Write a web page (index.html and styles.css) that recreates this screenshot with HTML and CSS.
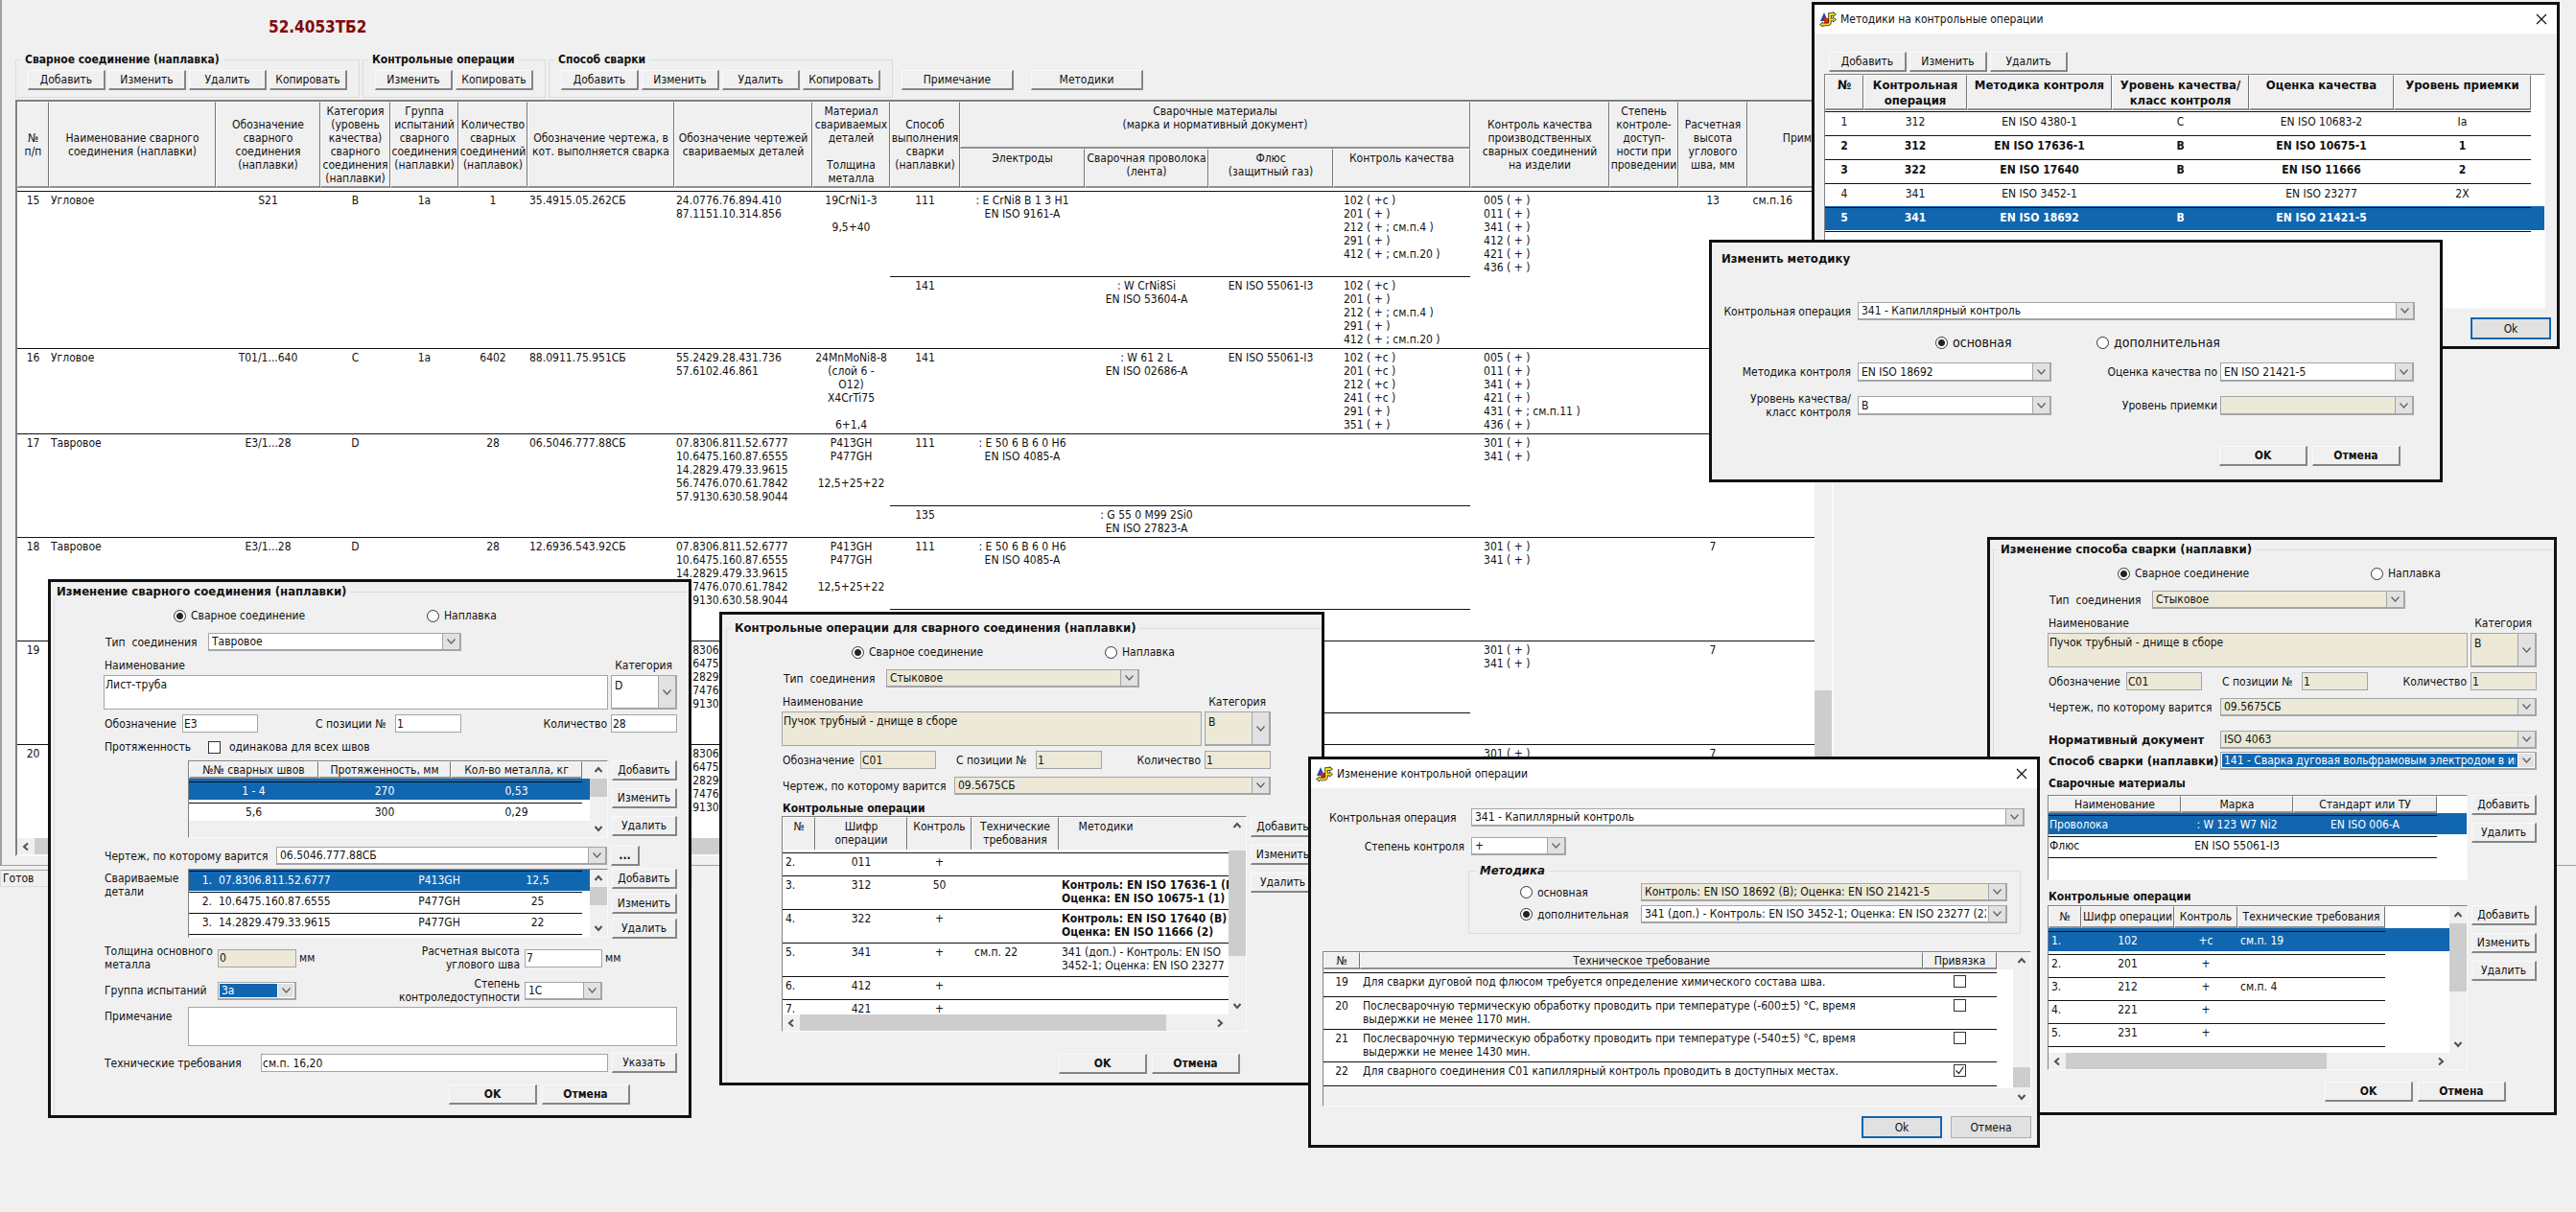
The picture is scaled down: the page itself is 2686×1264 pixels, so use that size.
FILE: index.html
```html
<!DOCTYPE html>
<html lang="ru">
<head>
<meta charset="utf-8">
<title>52.4053ТБ2</title>
<link rel="stylesheet" href="styles.css">
</head>
<body>
<svg class="defs" aria-hidden="true">
  <symbol id="up" viewBox="0 0 10 10"><path d="M1.5 7 5 3l3.500 4" fill="none" stroke="#505050" stroke-width="2"/></symbol>
  <symbol id="down" viewBox="0 0 10 10"><path d="M1.500 3 5 7l3.500-4" fill="none" stroke="#505050" stroke-width="2"/></symbol>
  <symbol id="left" viewBox="0 0 10 10"><path d="M7 1.500 3 5l4 3.500" fill="none" stroke="#505050" stroke-width="2"/></symbol>
  <symbol id="right" viewBox="0 0 10 10"><path d="M3 1.500 7 5l-4 3.500" fill="none" stroke="#505050" stroke-width="2"/></symbol>
  <symbol id="close" viewBox="0 0 12 12"><path d="M1 1l10 10M11 1 1 11" fill="none" stroke="#111" stroke-width="1.200"/></symbol>
  <symbol id="app" viewBox="0 0 18 16">
    <path d="M5 1 9 10H1z" fill="#2a4a9e"/>
    <path d="M5 7h5v5H5z" fill="#e0211b"/>
    <path d="M15 3h-4v8q0 2.500-2.500 2.500H3M11 8.500h4" fill="none" stroke="#222" stroke-width="3.400"/>
    <path d="M14 0l4 3-4 3zM14 5.500l4 3-4 3zM4 10.500 0 13.500l4 3z" fill="#222"/>
    <path d="M15 3h-4v8q0 2.500-2.500 2.500H3M11 8.500h4" fill="none" stroke="#f3e21a" stroke-width="1.800"/>
    <path d="M14.500 1.200 17 3l-2.500 1.800zM14.500 6.700 17 8.500l-2.500 1.800zM3.500 11.700 1 13.500l2.500 1.800z" fill="#f3e21a"/>
  </symbol>
</svg>

<main class="workspace">
  <h1>52.4053ТБ2</h1>
  <div class="toolbar">
    <fieldset class="group"><legend>Сварное соединение (наплавка)</legend>
      <button>Добавить</button><button>Изменить</button><button>Удалить</button><button>Копировать</button>
    </fieldset>
    <fieldset class="group"><legend>Контрольные операции</legend>
      <button>Изменить</button><button>Копировать</button>
    </fieldset>
    <fieldset class="group"><legend>Способ сварки</legend>
      <button>Добавить</button><button>Изменить</button><button>Удалить</button><button>Копировать</button>
    </fieldset>
    <div class="extra"><button>Примечание</button><button>Методики</button></div>
  </div>

  <section class="frame">
    <div class="view">
      <table class="welds">
        <colgroup><col style="width:33px"><col style="width:174px"><col style="width:109px"><col style="width:73px"><col style="width:71px"><col style="width:72px"><col style="width:153px"><col style="width:144px"><col style="width:81px"><col style="width:73px"><col style="width:130px"><col style="width:129px"><col style="width:130px"><col style="width:143px"><col style="width:145px"><col style="width:72px"><col style="width:72px"><col style="width:144px"></colgroup>
        <thead>
          <tr>
            <th rowspan="2">№<br>п/п</th><th rowspan="2">Наименование сварного<br>соединения (наплавки)</th><th rowspan="2">Обозначение<br>сварного<br>соединения<br>(наплавки)</th><th rowspan="2">Категория<br>(уровень<br>качества)<br>сварного<br>соединения<br>(наплавки)</th><th rowspan="2">Группа<br>испытаний<br>сварного<br>соединения<br>(наплавки)<br>&nbsp;</th><th rowspan="2">Количество<br>сварных<br>соединений<br>(наплавок)</th><th rowspan="2">Обозначение чертежа, в<br>кот. выполняется сварка</th><th rowspan="2">Обозначение чертежей<br>свариваемых деталей</th><th rowspan="2">Материал<br>свариваемых<br>деталей<br><br>Толщина<br>металла</th><th rowspan="2">Способ<br>выполнения<br>сварки<br>(наплавки)</th><th colspan="4" class="top">Сварочные материалы<br>(марка и нормативный документ)</th><th rowspan="2">Контроль качества<br>производственных<br>сварных соединений<br>на изделии</th><th rowspan="2">Степень<br>контроле-<br>доступ-<br>ности при<br>проведении<br>&nbsp;</th><th rowspan="2">Расчетная<br>высота<br>углового<br>шва, мм</th><th rowspan="2">Примечание<br>&nbsp;</th>
          </tr>
          <tr><th class="top">Электроды</th><th class="top">Сварочная проволока<br>(лента)</th><th class="top">Флюс<br>(защитный газ)</th><th class="top">Контроль качества</th></tr>
          <tr class="gap"><td colspan="18"></td></tr>
        </thead>
        <tbody>
          <tr class="h89"><td rowspan="2">15</td><td rowspan="2" class="l">Угловое</td><td rowspan="2">S21</td><td rowspan="2">B</td><td rowspan="2">1a</td><td rowspan="2">1</td><td rowspan="2" class="l">35.4915.05.262СБ</td><td rowspan="2" class="l">24.0776.76.894.410<br>87.1151.10.314.856</td><td rowspan="2">19CrNi1-3<br><br>9,5+40</td><td>111</td><td>: E CrNi8 B 1 3 H1<br>EN ISO 9161-A</td><td></td><td></td><td class="l in">102 ( +c )<br>201 ( + )<br>212 ( + ; см.п.4 )<br>291 ( + )<br>412 ( + ; см.п.20 )</td><td rowspan="2" class="l in2">005 ( + )<br>011 ( + )<br>341 ( + )<br>412 ( + )<br>421 ( + )<br>436 ( + )</td><td rowspan="2"></td><td rowspan="2">13</td><td rowspan="2" class="l">&nbsp;см.п.16</td></tr>
          <tr class="h75"><td>141</td><td></td><td>: W CrNi8Si<br>EN ISO 53604-A</td><td>EN ISO 55061-I3</td><td class="l in">102 ( +c )<br>201 ( + )<br>212 ( + ; см.п.4 )<br>291 ( + )<br>412 ( + ; см.п.20 )</td></tr>
          <tr class="h89"><td>16</td><td class="l">Угловое</td><td>T01/1...640</td><td>C</td><td>1a</td><td>6402</td><td class="l">88.0911.75.951СБ</td><td class="l">55.2429.28.431.736<br>57.6102.46.861</td><td>24MnMoNi8-8<br>(слой 6 -<br>O12)<br>X4CrTi75<br><br>6+1,4</td><td>141</td><td></td><td>: W 61 2 L<br>EN ISO 02686-A</td><td>EN ISO 55061-I3</td><td class="l in">102 ( +c )<br>201 ( +c )<br>212 ( +c )<br>241 ( +c )<br>291 ( + )<br>351 ( + )</td><td class="l in2">005 ( + )<br>011 ( + )<br>341 ( + )<br>421 ( + )<br>431 ( + ; см.п.11 )<br>436 ( + )</td><td></td><td></td><td></td></tr>
          <tr class="h75"><td rowspan="2">17</td><td rowspan="2" class="l">Тавровое</td><td rowspan="2">E3/1...28</td><td rowspan="2">D</td><td rowspan="2"></td><td rowspan="2">28</td><td rowspan="2" class="l">06.5046.777.88СБ</td><td rowspan="2" class="l">07.8306.811.52.6777<br>10.6475.160.87.6555<br>14.2829.479.33.9615<br>56.7476.070.61.7842<br>57.9130.630.58.9044</td><td rowspan="2">P413GH<br>P477GH<br><br>12,5+25+22</td><td>111</td><td>: E 50 6 B 6 0 H6<br>EN ISO 4085-A</td><td></td><td></td><td></td><td rowspan="2" class="l in2">301 ( + )<br>341 ( + )</td><td rowspan="2"></td><td rowspan="2"></td><td rowspan="2"></td></tr>
          <tr class="h33"><td>135</td><td></td><td>: G 55 0 M99 2Si0<br>EN ISO 27823-A</td><td></td><td></td></tr>
          <tr class="h75"><td rowspan="2">18</td><td rowspan="2" class="l">Тавровое</td><td rowspan="2">E3/1...28</td><td rowspan="2">D</td><td rowspan="2"></td><td rowspan="2">28</td><td rowspan="2" class="l">12.6936.543.92СБ</td><td rowspan="2" class="l">07.8306.811.52.6777<br>10.6475.160.87.6555<br>14.2829.479.33.9615<br>56.7476.070.61.7842<br>57.9130.630.58.9044</td><td rowspan="2">P413GH<br>P477GH<br><br>12,5+25+22</td><td>111</td><td>: E 50 6 B 6 0 H6<br>EN ISO 4085-A</td><td></td><td></td><td></td><td rowspan="2" class="l in2">301 ( + )<br>341 ( + )</td><td rowspan="2"></td><td rowspan="2">7</td><td rowspan="2"></td></tr>
          <tr class="h33"><td></td><td></td><td></td><td></td><td></td></tr>
          <tr class="h75"><td rowspan="2">19</td><td rowspan="2"></td><td rowspan="2"></td><td rowspan="2"></td><td rowspan="2"></td><td rowspan="2"></td><td rowspan="2"></td><td rowspan="2" class="l">07.8306.811.52.6777<br>10.6475.160.87.6555<br>14.2829.479.33.9615<br>56.7476.070.61.7842<br>57.9130.630.58.9044</td><td rowspan="2"></td><td></td><td></td><td></td><td></td><td></td><td rowspan="2" class="l in2">301 ( + )<br>341 ( + )</td><td rowspan="2"></td><td rowspan="2">7</td><td rowspan="2"></td></tr>
          <tr class="h33"><td></td><td></td><td></td><td></td><td></td></tr>
          <tr class="h108"><td>20</td><td></td><td></td><td></td><td></td><td></td><td></td><td class="l">07.8306.811.52.6777<br>10.6475.160.87.6555<br>14.2829.479.33.9615<br>56.7476.070.61.7842<br>57.9130.630.58.9044</td><td></td><td></td><td></td><td></td><td></td><td></td><td class="l in2">301 ( + )<br>341 ( + )</td><td></td><td>7</td><td></td></tr>
        </tbody>
      </table>
    </div>
    <div class="vscroll"><svg><use href="#up"/></svg><i style="margin-top:596px;height:110px"></i><svg class="end"><use href="#down"/></svg></div>
    <div class="hscroll"><svg><use href="#left"/></svg><i style="width:1300px"></i><svg class="end"><use href="#right"/></svg></div>
  </section>
</main>
<footer class="status">Готов</footer>

<section class="window w-weld">
  <fieldset><legend>Изменение сварного соединения (наплавки)</legend>
    <div class="line radios"><label><input type="radio" name="a" checked>Сварное соединение</label><label><input type="radio" name="a">Наплавка</label></div>
    <div class="line type"><label for="a1">Тип&nbsp; соединения</label><select id="a1"><option>Тавровое</option></select></div>
    <div class="line caps"><label for="a2">Наименование</label><label for="a3">Категория</label></div>
    <div class="line name"><textarea id="a2">Лист-труба</textarea><select id="a3"><option>D</option></select></div>
    <div class="line ids"><label for="a4">Обозначение</label><input id="a4" class="code" value="E3"><label for="a5" class="pos">С позиции №</label><input id="a5" value="1"><label for="a6" class="qty">Количество</label><input id="a6" value="28"></div>
    <div class="line same"><span>Протяженность</span><label><input type="checkbox">одинакова для всех швов</label></div>
    <div class="list">
      <span class="side"></span>
      <div class="box h81">
        <div class="rows r3">
          <table><colgroup><col style="width:135px"><col style="width:138px"><col style="width:137px"><col></colgroup>
            <thead><tr><th>№№ сварных швов</th><th>Протяженность, мм</th><th>Кол-во металла, кг</th><td></td></tr></thead>
            <tbody><tr class="sel"><td>1 - 4</td><td>270</td><td>0,53</td><td></td></tr><tr><td>5,6</td><td>300</td><td>0,29</td><td></td></tr></tbody></table>
        </div>
        <div class="vscroll"><svg><use href="#up"/></svg><i style="height:19px"></i><svg class="end"><use href="#down"/></svg></div>
      </div>
      <div class="acts"><button>Добавить</button><button>Изменить</button><button>Удалить</button></div>
    </div>
    <div class="line draw"><label for="a7">Чертеж, по которому варится</label><select id="a7"><option>06.5046.777.88СБ</option></select><button class="dots">...</button></div>
    <div class="list parts">
      <span class="side">Свариваемые<br>детали</span>
      <div class="box h72">
        <div class="rows r1">
          <table><colgroup><col style="width:31px"><col style="width:174px"><col style="width:112px"><col style="width:93px"><col></colgroup>
            <tbody><tr class="sel"><td class="r">1.</td><td class="l">07.8306.811.52.6777</td><td>P413GH</td><td>12,5</td><td></td></tr><tr><td class="r">2.</td><td class="l">10.6475.160.87.6555</td><td>P477GH</td><td>25</td><td></td></tr><tr><td class="r">3.</td><td class="l">14.2829.479.33.9615</td><td>P477GH</td><td>22</td><td></td></tr><tr><td></td><td></td><td></td><td></td><td></td></tr></tbody></table>
        </div>
        <div class="vscroll"><svg><use href="#up"/></svg><i style="height:19px"></i><svg class="end"><use href="#down"/></svg></div>
      </div>
      <div class="acts"><button>Добавить</button><button>Изменить</button><button>Удалить</button></div>
    </div>
    <div class="pair"><label for="b1">Толщина основного<br>металла</label><input id="b1" class="off" value="0"><span>мм</span><label for="b2" class="r">Расчетная высота<br>углового шва</label><input id="b2" value="7"><span>мм</span></div>
    <div class="pair"><label for="b3">Группа испытаний</label><select id="b3" class="focus"><option>3a</option></select><span></span><label for="b4" class="r">Степень<br>контроледоступности</label><select id="b4"><option>1C</option></select><span></span></div>
    <div class="line note"><label for="b5">Примечание</label><textarea id="b5"></textarea></div>
    <div class="line tech"><label for="b6">Технические требования</label><input id="b6" value="см.п. 16,20"><button>Указать</button></div>
    <div class="ok"><button>OK</button><button>Отмена</button></div>
  </fieldset>
</section>

<section class="window w-ops">
  <fieldset><legend>Контрольные операции для сварного соединения (наплавки)</legend>
    <div class="line radios"><label><input type="radio" name="c" checked>Сварное соединение</label><label><input type="radio" name="c">Наплавка</label></div>
    <div class="line type"><label for="c1">Тип&nbsp; соединения</label><select id="c1" class="off"><option>Стыковое</option></select></div>
    <div class="line caps"><label for="c2">Наименование</label><label for="c3">Категория</label></div>
    <div class="line name"><textarea id="c2" class="off">Пучок трубный - днище в сборе</textarea><select id="c3" class="off"><option>B</option></select></div>
    <div class="line ids"><label for="c4">Обозначение</label><input id="c4" class="code off" value="C01"><label for="c5" class="pos">С позиции №</label><input id="c5" class="off" value="1"><label for="c6" class="qty">Количество</label><input id="c6" class="off" value="1"></div>
    <div class="line draw"><label for="c7">Чертеж, по которому варится</label><select id="c7" class="off"><option>09.5675СБ</option></select></div>
    <h2>Контрольные операции</h2>
    <div class="list wide">
      <div class="box h225">
        <div class="rows r3 white">
          <table><colgroup><col style="width:34px"><col style="width:96px"><col style="width:67px"><col style="width:91px"><col></colgroup>
            <thead class="two"><tr><th>№</th><th>Шифр<br>операции</th><th>Контроль</th><th>Технические<br>требования</th><th class="wide-th">Методики</th></tr></thead>
            <tbody><tr class="h24"><td class="l">2.</td><td>011</td><td>+</td><td></td><td></td></tr>
            <tr class="h35"><td class="l">3.</td><td>312</td><td>50</td><td></td><td class="l b">Контроль: EN ISO 17636-1 (B)<br>Оценка: EN ISO 10675-1 (1)</td></tr>
            <tr class="h35"><td class="l">4.</td><td>322</td><td>+</td><td></td><td class="l b">Контроль: EN ISO 17640 (B)<br>Оценка: EN ISO 11666 (2)</td></tr>
            <tr class="h35"><td class="l">5.</td><td>341</td><td>+</td><td class="l">см.п. 22</td><td class="l">341 (доп.) - Контроль: EN ISO<br>3452-1; Оценка: EN ISO 23277</td></tr>
            <tr class="h24"><td class="l">6.</td><td>412</td><td>+</td><td></td><td></td></tr>
            <tr class="h24"><td class="l">7.</td><td>421</td><td>+</td><td></td><td></td></tr></tbody></table>
        </div>
        <div class="vscroll"><svg><use href="#up"/></svg><i style="margin-top:17px;height:110px"></i><svg class="end"><use href="#down"/></svg></div>
        <div class="hscroll"><svg><use href="#left"/></svg><i style="width:382px"></i><svg class="end"><use href="#right"/></svg></div>
      </div>
      <div class="acts"><button>Добавить</button><button>Изменить</button><button>Удалить</button></div>
    </div>
    <div class="ok"><button>OK</button><button>Отмена</button></div>
  </fieldset>
</section>

<section class="window w-method">
  <fieldset><legend>Изменение способа сварки (наплавки)</legend>
    <div class="line radios"><label><input type="radio" name="d" checked>Сварное соединение</label><label><input type="radio" name="d">Наплавка</label></div>
    <div class="line type"><label for="d1">Тип&nbsp; соединения</label><select id="d1" class="off"><option>Стыковое</option></select></div>
    <div class="line caps"><label for="d2">Наименование</label><label for="d3">Категория</label></div>
    <div class="line name"><textarea id="d2" class="off">Пучок трубный - днище в сборе</textarea><select id="d3" class="off"><option>B</option></select></div>
    <div class="line ids"><label for="d4">Обозначение</label><input id="d4" class="code off" value="C01"><label for="d5" class="pos">С позиции №</label><input id="d5" class="off" value="1"><label for="d6" class="qty">Количество</label><input id="d6" class="off" value="1"></div>
    <div class="line draw"><label for="d7">Чертеж, по которому варится</label><select id="d7" class="off"><option>09.5675СБ</option></select></div>
    <div class="line draw b norm"><label for="d8">Нормативный документ</label><select id="d8" class="off"><option>ISO 4063</option></select></div>
    <div class="line draw b way"><label for="d9">Способ сварки (наплавки)</label><select id="d9" class="focus"><option>141 - Сварка дуговая вольфрамовым электродом в инертном газе</option></select></div>
    <h2>Сварочные материалы</h2>
    <div class="list mats">
      <div class="box h89">
        <div class="rows r2 white">
          <table><colgroup><col style="width:138px"><col style="width:117px"><col style="width:150px"><col></colgroup>
            <thead><tr><th>Наименование</th><th>Марка</th><th>Стандарт или ТУ</th><td></td></tr></thead>
            <tbody><tr class="sel"><td class="l">Проволока</td><td>: W 123 W7 Ni2</td><td>EN ISO 006-A</td><td></td></tr><tr><td class="l">Флюс</td><td>EN ISO 55061-I3</td><td></td><td></td></tr><tr><td></td><td></td><td></td><td></td></tr></tbody></table>
        </div>
      </div>
      <div class="acts"><button>Добавить</button><button>Удалить</button></div>
    </div>
    <h2 class="second">Контрольные операции</h2>
    <div class="list ops">
      <div class="box h172">
        <div class="rows r3 white">
          <table><colgroup><col style="width:34px"><col style="width:97px"><col style="width:66px"><col style="width:154px"><col></colgroup>
            <thead class="mid"><tr><th>№</th><th>Шифр операции</th><th>Контроль</th><th>Технические требования</th><td></td></tr></thead>
            <tbody><tr class="sel h24"><td class="l">1.</td><td>102</td><td>+c</td><td class="l">см.п. 19</td><td></td></tr>
            <tr class="h24"><td class="l">2.</td><td>201</td><td>+</td><td></td><td></td></tr>
            <tr class="h24"><td class="l">3.</td><td>212</td><td>+</td><td class="l">см.п. 4</td><td></td></tr>
            <tr class="h24"><td class="l">4.</td><td>221</td><td>+</td><td></td><td></td></tr>
            <tr class="h24"><td class="l">5.</td><td>231</td><td>+</td><td></td><td></td></tr>
            <tr class="h24"><td></td><td></td><td></td><td></td><td></td></tr></tbody></table>
        </div>
        <div class="vscroll"><svg><use href="#up"/></svg><i style="height:71px"></i><svg class="end"><use href="#down"/></svg></div>
        <div class="hscroll"><svg><use href="#left"/></svg><i style="width:272px"></i><svg class="end"><use href="#right"/></svg></div>
      </div>
      <div class="acts"><button>Добавить</button><button>Изменить</button><button>Удалить</button></div>
    </div>
    <div class="ok"><button>OK</button><button>Отмена</button></div>
  </fieldset>
</section>

<section class="window w-check">
  <header><svg class="logo"><use href="#app"/></svg><span>Изменение контрольной операции</span><button class="x" aria-label="Закрыть"><svg><use href="#close"/></svg></button></header>
  <div class="line op"><label for="e1">Контрольная операция</label><select id="e1"><option>341 - Капиллярный контроль</option></select></div>
  <div class="line deg"><label for="e2">Степень контроля</label><select id="e2"><option>+</option></select></div>
  <fieldset><legend>Методика</legend>
    <div class="line"><label><input type="radio" name="e">основная</label><select class="off" aria-label="Основная методика"><option>Контроль: EN ISO 18692 (B); Оценка: EN ISO 21421-5</option></select></div>
    <div class="line"><label><input type="radio" name="e" checked>дополнительная</label><select aria-label="Дополнительная методика"><option>341 (доп.) - Контроль: EN ISO 3452-1; Оценка: EN ISO 23277 (2X)</option></select></div>
  </fieldset>
  <div class="box h162">
    <div class="rows r3">
      <table><colgroup><col style="width:38px"><col style="width:587px"><col style="width:77px"><col></colgroup>
        <thead><tr><th>№</th><th>Техническое требование</th><th>Привязка</th><td></td></tr></thead>
        <tbody><tr class="h25"><td>19</td><td class="l">Для сварки дуговой под флюсом требуется определение химического состава шва.</td><td><input type="checkbox" aria-label="19"></td><td></td></tr>
        <tr class="h33"><td>20</td><td class="l">Послесварочную термическую обработку проводить при температуре (-600±5) °C, время<br>выдержки не менее 1170 мин.</td><td><input type="checkbox" aria-label="20"></td><td></td></tr>
        <tr class="h33"><td>21</td><td class="l">Послесварочную термическую обработку проводить при температуре (-540±5) °C, время<br>выдержки не менее 1430 мин.</td><td><input type="checkbox" aria-label="21"></td><td></td></tr>
        <tr class="h31 last"><td>22</td><td class="l">Для сварного соединения C01 капиллярный контроль проводить в доступных местах.</td><td><input type="checkbox" checked aria-label="22"></td><td></td></tr></tbody></table>
    </div>
    <div class="vscroll"><svg><use href="#up"/></svg><i style="margin-top:102px;height:21px"></i><svg class="end"><use href="#down"/></svg></div>
  </div>
  <div class="flat"><button class="main">Ok</button><button>Отмена</button></div>
</section>

<section class="window w-list">
  <header><svg class="logo"><use href="#app"/></svg><span>Методики на контрольные операции</span><button class="x" aria-label="Закрыть"><svg><use href="#close"/></svg></button></header>
  <div class="bar"><button>Добавить</button><button>Изменить</button><button>Удалить</button></div>
  <div class="box h245">
    <div class="rows r1 white">
      <table><colgroup><col style="width:40px"><col style="width:108px"><col style="width:151px"><col style="width:143px"><col style="width:151px"><col style="width:143px"><col></colgroup>
        <thead class="big"><tr><th>№</th><th>Контрольная<br>операция</th><th>Методика контроля</th><th>Уровень качества/<br>класс контроля</th><th>Оценка качества</th><th>Уровень приемки</th><td></td></tr></thead>
        <tbody><tr><td>1</td><td>312</td><td>EN ISO 4380-1</td><td>C</td><td>EN ISO 10683-2</td><td>Ia</td><td></td></tr>
        <tr class="b"><td>2</td><td>312</td><td>EN ISO 17636-1</td><td>B</td><td>EN ISO 10675-1</td><td>1</td><td></td></tr>
        <tr class="b"><td>3</td><td>322</td><td>EN ISO 17640</td><td>B</td><td>EN ISO 11666</td><td>2</td><td></td></tr>
        <tr><td>4</td><td>341</td><td>EN ISO 3452-1</td><td></td><td>EN ISO 23277</td><td>2X</td><td></td></tr>
        <tr class="b sel"><td>5</td><td>341</td><td>EN ISO 18692</td><td>B</td><td>EN ISO 21421-5</td><td></td><td></td></tr>
        <tr><td></td><td></td><td></td><td></td><td></td><td></td><td></td></tr></tbody></table>
    </div>
  </div>
  <div class="flat"><button class="main">Ok</button></div>
</section>

<section class="window w-edit">
  <h2>Изменить методику</h2>
  <div class="line op"><label for="f1">Контрольная операция</label><select id="f1"><option>341 - Капиллярный контроль</option></select></div>
  <div class="line kinds"><label><input type="radio" name="f" checked>основная</label><label><input type="radio" name="f">дополнительная</label></div>
  <div class="line duo"><label for="f2">Методика контроля</label><select id="f2"><option>EN ISO 18692</option></select><label for="f3">Оценка качества по</label><select id="f3"><option>EN ISO 21421-5</option></select></div>
  <div class="line duo"><label for="f4">Уровень качества/<br>класс контроля</label><select id="f4"><option>B</option></select><label for="f5">Уровень приемки</label><select id="f5" class="off"><option></option></select></div>
  <div class="ok"><button>OK</button><button>Отмена</button></div>
</section>
</body>
</html>
```
FILE: styles.css
```css
* { box-sizing: border-box; }
html { min-height: 100%; background: #f0f0f0; }
body {
  position: relative;
  margin: 0;
  min-height: 100vh;
  overflow: hidden;
  background: #f0f0f0;
  color: #111;
  font: 12px/14px "DejaVu Sans Condensed", "DejaVu Sans", sans-serif;
}
.defs { position: absolute; width: 0; height: 0; }
h1, h2, p, fieldset, legend { margin: 0; padding: 0; }
fieldset { border: 0; min-width: 0; }
h2, legend, .b { font-size: 12px; font-weight: bold; }
button, input, select, textarea { font: inherit; color: inherit; margin: 0; border-radius: 0; }

button {
  flex: none;
  height: 21px;
  padding: 0;
  background: #f0f0f0;
  border: solid #fafafa;
  border-width: 1px 2px 2px 1px;
  border-right-color: #858585;
  border-bottom-color: #858585;
  white-space: nowrap;
}
input, textarea, select {
  height: 19px;
  padding: 0 2px;
  border: 1px solid #a3a5a8;
  background-color: #fff;
  outline: 0;
}
input:not([type]) { width: 69px; padding: 0 1px; }
textarea { display: block; resize: none; overflow: hidden; padding: 2px 1px; }
select {
  appearance: none;
  padding: 0 20px 0 3px;
  border-width: 1px 2px 2px 1px;
  background-image:
    url("data:image/svg+xml,%3Csvg xmlns='http://www.w3.org/2000/svg' width='9' height='6'%3E%3Cpath d='M.5.5l4 4.500 4-4.500' fill='none' stroke='%23606060' stroke-width='1.200'/%3E%3C/svg%3E"),
    linear-gradient(#e1e1e1, #e1e1e1),
    linear-gradient(#a3a5a8, #a3a5a8);
  background-size: 9px 6px, 17px 100%, 18px 100%;
  background-position: right 4px center, right, right;
  background-repeat: no-repeat;
  text-overflow: clip;
}
.off { background-color: #ece9d8; }
.focus {
  background-image:
    url("data:image/svg+xml,%3Csvg xmlns='http://www.w3.org/2000/svg' width='9' height='6'%3E%3Cpath d='M.5.5l4 4.500 4-4.500' fill='none' stroke='%23606060' stroke-width='1.200'/%3E%3C/svg%3E"),
    linear-gradient(#e1e1e1, #e1e1e1),
    linear-gradient(#fff, #fff);
  background-color: #1166b0;
  color: #fff;
  box-shadow: inset 0 0 0 1px #fff;
}
input[type="radio"] {
  flex: none;
  appearance: none;
  width: 13px;
  height: 13px;
  padding: 0;
  border: 1px solid #333;
  border-radius: 50%;
}
input[type="radio"]:checked { background: radial-gradient(circle, #222 0 3px, #fff 4px); }
input[type="checkbox"] {
  flex: none;
  appearance: none;
  width: 13px;
  height: 13px;
  padding: 0;
  border: 1px solid #333;
}
input[type="checkbox"]:checked {
  background: url("data:image/svg+xml,%3Csvg xmlns='http://www.w3.org/2000/svg' width='11' height='11'%3E%3Cpath d='M1.500 5.500l3 3 5-7' fill='none' stroke='%23222' stroke-width='1.200'/%3E%3C/svg%3E") center no-repeat;
}

/* main sheet */
.workspace { padding: 19px 0 9px 14px; border-left: 2px solid #a0a0a0; border-bottom: 1px solid #a0a0a0; }
h1 { padding-left: 264px; font-size: 17px; line-height: 18px; color: #800a0a; }
.toolbar { display: flex; gap: 3px; padding-top: 18px; }
.group { display: flex; gap: 3px; height: 47px; padding: 4px 12px 0; border: 1px solid #dcdcdc; }
.group legend { padding: 0 4px; margin-left: -7px; }
.group button { width: 81px; }
.extra { display: flex; gap: 18px; padding: 18px 0 0 6px; }
.extra button { width: 117px; }
.frame {
  display: grid;
  grid-template-columns: 1fr 18px;
  width: 71%;
  margin-top: 2px;
  border: 2px solid #808080;
  border-right-color: #fafafa;
  border-bottom-color: #fafafa;
}
.view { height: 768px; overflow: hidden; background: #fff; }
.hscroll { grid-column: 1 / -1; display: flex; align-items: center; height: 17px; padding-right: 18px; background: #f0f0f0; }
.vscroll { display: flex; flex-direction: column; align-items: center; width: 18px; background: #f0f0f0; }
.vscroll svg { flex: none; width: 10px; height: 10px; margin: 4px 0; }
.hscroll svg { flex: none; width: 10px; height: 10px; margin: 0 4px; }
.vscroll .end { margin-top: auto; }
.hscroll .end { margin-left: auto; }
.vscroll i { width: 18px; background: #cdcdcd; }
.hscroll i { height: 17px; background: #cdcdcd; }

table { width: 100%; table-layout: fixed; border-collapse: separate; border-spacing: 0; }
td, th { padding: 0; font-weight: normal; text-align: center; vertical-align: top; white-space: nowrap; }
.b td, td.b { font-weight: bold; }
th {
  background: #f0f0f0;
  border: solid #fafafa;
  border-width: 1px 1px 2px;
  border-right-color: #757575;
  border-bottom-color: #909090;
}
.welds { width: 1948px; }
.welds th { height: 41px; vertical-align: middle; }
.welds tr:first-child th { height: 49px; }
.welds th.top { padding-top: 2px; vertical-align: top; }
.welds .gap td { height: 3px; }
.welds tbody td { padding-top: 2px; border-top: 1px solid #111; }
td.l { text-align: left; }
td.r { text-align: right; }
.welds td.l { padding-left: 2px; }
.welds td.in { padding-left: 11px; }
.welds td.in2 { padding-left: 14px; }
.welds td, .welds th { overflow: hidden; }
.h24 { height: 24px; }
.h25 { height: 25px; }
.h31 { height: 31px; }
.h33 { height: 33px; }
.h35 { height: 35px; }
.h75 { height: 75px; }
.h89 { height: 89px; }
.h108 { height: 108px; }

.status { width: 722px; margin-top: 4px; padding: 1px 2px; border: 1px solid #dcdcdc; border-top-color: #a0a0a0; }

/* windows lying over the sheet */
.window { position: absolute; border: 3px solid #111; background: #f0f0f0; overflow: hidden; }
.w-weld { left: 50px; top: 604px; width: 671px; --form: 598px; --mid: 59px; }
.w-ops { left: 750px; top: 638px; width: 631px; --form: 510px; --mid: 20px; }
.w-method { left: 2072px; top: 560px; width: 594px; --form: 510px; --mid: 20px; }
.w-check { left: 1364px; top: 789px; width: 763px; }
.w-list { left: 1889px; top: 2px; width: 780px; }
.w-edit { left: 1782px; top: 250px; width: 765px; }

.window > fieldset { margin: 3px 0 0 3px; padding: 0 0 11px 51px; border: 1px solid #dcdcdc; border-width: 1px 0 0 1px; }
.window > fieldset > legend { margin-left: -53px; padding: 0 4px; font-size: 13px; }
.w-ops > fieldset { margin: 7px 0 0 4px; padding-left: 57px; padding-bottom: 9px; }
.w-method > fieldset { padding-left: 56px; }

.line { display: flex; align-items: center; width: var(--form); }
.line > label, .line > span { flex: none; }
.line label:has(> input) { display: flex; align-items: center; gap: 5px; }
.radios { padding: 11px 0 0 73px; }
.radios label { width: 264px; }
.type { padding-top: 11px; }
.type label { width: 109px; padding-left: 2px; }
.type select { width: 264px; }
.caps { justify-content: space-between; padding: 8px 5px 0 1px; }
.name { gap: 3px; padding-top: 3px; }
.name textarea { flex: 1; height: 36px; }
.name select { width: 69px; height: 36px; padding-bottom: 14px; }
.ids { padding-top: 5px; }
.ids label { padding-left: 1px; }
.ids label:first-child { width: 82px; }
.ids .code { width: 79px; }
.ids .pos { width: 84px; margin-left: var(--mid); }
.ids .qty { margin-left: auto; padding-right: 4px; }
.same { padding-top: 8px; }
.same span { width: 109px; padding-left: 1px; }
.same label { height: 14px; }
.same label:has(> input) { gap: 9px; }
.draw { padding-top: 8px; }
.draw label { width: 180px; padding-left: 1px; }
.draw select { flex: 1; min-width: 0; }
.draw .dots { width: 30px; margin: 0 39px 0 4px; font-weight: bold; }
.draw.norm { padding-top: 15px; }
.draw.way { padding-top: 3px; }
.draw.b { font-size: 13px; }
.draw.b select { font-size: 12px; font-weight: normal; }
fieldset h2 { padding: 7px 0 1px 1px; }
.w-method h2 { padding-bottom: 5px; }
.w-method h2.second { padding: 10px 0 2px 1px; }

.list { display: flex; gap: 4px; width: var(--form); margin-top: 7px; }
h2 + .list { margin-top: 0; }
.list.parts { margin-top: 3px; }
.list.wide { width: 557px; }
.list.wide .acts { padding-top: 1px; }
.side { width: 84px; padding: 3px 0 0 1px; }
.box {
  flex: 1;
  display: grid;
  grid-template-columns: 1fr auto;
  grid-template-rows: 1fr auto;
  min-width: 0;
  border: 1px solid #828282;
  border-right-color: #fafafa;
  border-bottom-color: #fafafa;
}
.h81 { height: 81px; }
.h72 { height: 72px; }
.h225 { height: 225px; }
.box.h89 { height: 89px; }
.h172 { height: 172px; }
.h162 { height: 162px; }
.h245 { height: 245px; }
.rows { overflow: hidden; min-width: 0; }
.white { background: #fff; }
.r1 { --rule: 1px; --pad: 4px; }
.r2 { --rule: 2px; --pad: 5px; }
.r3 { --rule: 3px; --pad: 6px; }
.rows th { height: 18px; padding-top: 1px; }
.rows tbody td {
  height: 22px;
  padding-top: var(--pad);
  background: linear-gradient(#111, #111) 0 var(--rule) / 100% 1px no-repeat #fff;
}
.rows tbody tr[class*="h"] td { height: auto; }
.rows tbody td:last-child:empty { background-image: none; }
.w-ops .rows tbody td:last-child { background-image: linear-gradient(#111, #111); }
.rows .sel td { background-color: #1166b0; color: #fff; }
.rows .last td {
  background-image: linear-gradient(#111, #111), linear-gradient(#111, #111);
  background-position: 0 var(--rule), 0 28px;
}
.rows td.l { padding-left: 3px; }
.parts td.l { padding-left: 0; }
.parts td.r { padding-right: 7px; }
.mats td.l { padding-left: 1px; }
.two th { height: 34px; padding-top: 2px; border-bottom: 0; }
.two .wide-th { padding-right: 80px; border-right: 0; }
.mid th { height: 23px; padding-top: 3px; }
.big th { height: 37px; padding-top: 2px; font-size: 13px; font-weight: bold; line-height: 16px; }
.acts { display: flex; flex-direction: column; gap: 8px; }
.acts button { width: 68px; }
.parts .acts { gap: 5px; }

.pair { display: grid; grid-template-columns: 119px 82px 43px 195px 81px 1fr; align-items: center; width: var(--form); height: 28px; margin-top: 6px; }
.pair label { padding-left: 1px; }
.pair label.r { padding-right: 5px; text-align: right; }
.pair span { padding-left: 3px; }
.pair input:not([type]), .pair select { width: 100%; }
.note { align-items: flex-start; padding-top: 3px; }
.note label { width: 88px; padding: 3px 0 0 1px; }
.note textarea { flex: 1; height: 41px; }
.tech { padding-top: 7px; }
.tech label { width: 164px; padding-left: 1px; }
.tech input:not([type]) { flex: 1; margin-right: 4px; }
.tech button { width: 68px; }
.ok { display: flex; justify-content: flex-end; gap: 5px; width: var(--form); padding-top: 12px; }
.ok button { width: 92px; font-weight: bold; }
.w-weld .ok { padding-right: 49px; }
.w-ops .ok { padding: 23px 32px 0 0; }
.w-method .ok { padding-right: 32px; }

/* titled windows */
.window header { display: flex; align-items: center; height: 30px; padding: 0 10px 0 5px; background: #fff; }
.logo { width: 18px; height: 16px; margin-right: 4px; }
.x { width: 12px; height: 12px; margin-left: auto; border: 0; background: none; }
.x svg { display: block; width: 12px; height: 12px; }
.flat { display: flex; justify-content: flex-end; gap: 9px; padding: 10px 6px 7px; }
.flat button { width: 84px; height: 23px; background: #e1e1e1; border: 1px solid #adadad; }
.flat .main { border: 2px solid #1166b0; }

.w-check .line { width: auto; }
.w-check .op { padding: 21px 13px 0 19px; }
.w-check .op label { width: 148px; }
.w-check .op select { flex: 1; }
.w-check .deg { padding: 11px 0 0 19px; }
.w-check .deg label { width: 148px; padding-right: 7px; text-align: right; }
.w-check .deg select { width: 99px; }
.w-check > fieldset { margin: 9px 17px 0 164px; padding: 2px 13px 10px 53px; border-width: 1px; }
.w-check > fieldset > legend { margin-left: -46px; font-style: italic; }
.w-check fieldset .line { padding-top: 4px; }
.w-check fieldset label { width: 126px; }
.w-check fieldset select { flex: 1; min-width: 0; }
.w-check .box { margin: 18px 6px 0 12px; }
.w-check tbody input { display: block; margin: 0 auto; }

.bar { display: flex; gap: 3px; padding: 19px 0 2px 15px; }
.bar button { width: 81px; }
.w-list .box { margin: 0 12px 0 10px; }
.w-list tbody td { height: 25px; padding-top: 5px; }
.w-list .flat { padding-top: 9px; }

.w-edit { padding: 10px 0 14px 10px; }
.w-edit h2 { font-size: 13px; }
.w-edit .line { width: 723px; }
.w-edit .op { padding-top: 38px; }
.w-edit .op label, .w-edit .duo label { width: 142px; padding-right: 7px; text-align: right; }
.w-edit .op select { flex: 1; }
.kinds { padding: 15px 0 0 223px; font-size: 14px; line-height: 16px; }
.kinds label { width: 168px; }
.duo { height: 28px; margin-top: 9px; }
.duo + .duo { margin-top: 7px; }
.w-edit .duo label:nth-of-type(2) { width: 176px; padding-right: 3px; }
.duo select { width: 202px; height: 20px; }
.w-edit .ok { width: 708px; padding-top: 28px; }
```
